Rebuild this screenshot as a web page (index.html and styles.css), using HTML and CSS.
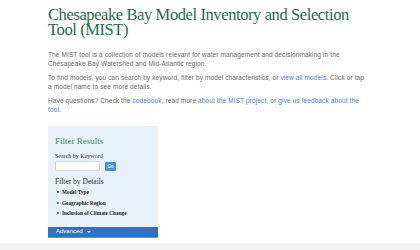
FILE: index.html
```html
<!DOCTYPE html>
<html>
<head>
  <title>MIST | Chesapeake Bay Model Inventory and Selection Tool</title>
  <link rel="stylesheet" href="styles.css">
</head>
<body>
  <div class="page">
    <h1 class="title">Chesapeake Bay Model Inventory and Selection Tool (MIST)</h1>
    <p class="intro">The MIST tool is a collection of models relevant for water management and decisionmaking in the Chesapeake Bay Watershed and Mid-Atlantic region.</p>
    <p class="intro">To find models, you can search by keyword, filter by model characteristics, or <a href="#">view all models</a>. Click or tap a model name to see more details.</p>
    <p class="intro">Have questions? Check the <a href="#">codebook</a>, read more <a href="#">about the MIST project</a>, or <a href="#">give us feedback about the tool</a>.</p>

    <div class="filterbox">
      <div class="filterbody">
        <h2 class="filterhead">Filter Results</h2>
        <div class="label">Search by Keyword</div>
        <div class="searchrow">
          <input class="keyword" type="text">
          <button class="gobtn">Go</button>
        </div>
        <h3 class="subhead">Filter by Details</h3>
        <ul class="details">
          <li>Model Type</li>
          <li>Geographic Region</li>
          <li>Inclusion of Climate Change</li>
        </ul>
      </div>
      <div class="advanced">Advanced <span class="caret"></span></div>
    </div>
  </div>
  <div class="footer"></div>
</body>
</html>
```

FILE: styles.css
```css
body {
  margin: 0;
  background: #ffffff;
  height: 250px;
  display: flex;
  flex-direction: column;
  overflow: hidden;
}
.page {
  padding: 0 0 0 48px;
  width: 320px;
  flex: 1;
}
.title {
  font-family: "Liberation Serif", "DejaVu Serif", serif;
  font-weight: normal;
  color: #1f6b4e;
  font-size: 16.5px;
  line-height: 15px;
  letter-spacing: -0.4px;
  margin: 7px 0 13px;
}
.intro {
  font-family: "Liberation Sans", Arial, sans-serif;
  font-size: 6.5px;
  line-height: 9px;
  letter-spacing: 0.12px;
  color: #666666;
  margin: 0 0 5px;
}
.intro a {
  color: #4d7fc4;
  text-decoration: none;
}
.filterbox {
  margin-top: 12px;
  width: 110px;
  background: #e8f1f9;
}
.filterbody {
  padding: 10px 7px 8px;
}
.filterhead {
  font-family: "Liberation Serif", serif;
  font-weight: normal;
  font-size: 9px;
  line-height: 11px;
  color: #3d8a6c;
  margin: 0 0 6px;
}
.label {
  font-family: "Liberation Serif", serif;
  font-size: 6px;
  line-height: 7px;
  color: #333333;
}
.searchrow {
  display: flex;
  align-items: center;
  gap: 5px;
  margin: 1px 0 6px;
}
.keyword {
  width: 45px;
  height: 10px;
  box-sizing: border-box;
  border: 1px solid #cfd6dd;
  border-radius: 1px;
  background: #ffffff;
  padding: 0;
  margin: 0;
}
.gobtn {
  height: 9px;
  width: 11px;
  padding: 0;
  border: none;
  border-radius: 1px;
  background: #3e90e0;
  color: #ffffff;
  font-family: "Liberation Sans", sans-serif;
  font-size: 4.5px;
  font-weight: bold;
}
.subhead {
  font-family: "Liberation Serif", serif;
  font-weight: normal;
  font-size: 7.5px;
  line-height: 9px;
  color: #333333;
  margin: 0 0 1px;
}
.details {
  list-style: none;
  margin: 0;
  padding: 0 0 0 2px;
  font-family: "Liberation Serif", serif;
  font-size: 5.3px;
  font-weight: bold;
  color: #222222;
}
.details li {
  line-height: 10.5px;
  display: flex;
  align-items: center;
}
.details li::before {
  content: "";
  width: 2px;
  height: 2px;
  background: #4d7fc4;
  margin-right: 3px;
}
.advanced {
  background: #2f73c0;
  border-bottom: 1px solid #5b93d3;
  height: 11px;
  box-sizing: border-box;
  padding-left: 8px;
  font-family: "Liberation Sans", sans-serif;
  font-size: 6px;
  line-height: 9px;
  color: #ffffff;
  display: flex;
  align-items: center;
  gap: 4px;
}
.caret {
  width: 0;
  height: 0;
  border-left: 2.5px solid transparent;
  border-right: 2.5px solid transparent;
  border-top: 2.5px solid #ffffff;
}
.footer {
  height: 7px;
  background: #f2f2f2;
}
```
